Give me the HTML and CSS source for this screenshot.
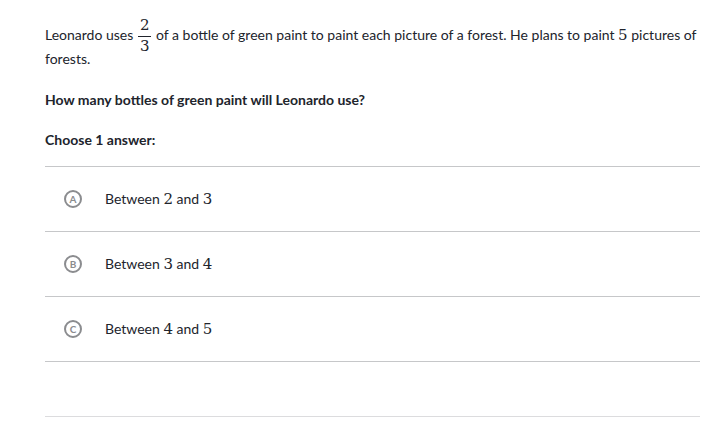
FILE: index.html
```html
<!DOCTYPE html>
<html>
<head>
<meta charset="utf-8">
<link rel="stylesheet" href="styles.css">
</head>
<body>
<div class="page">
  <p class="prompt">Leonardo uses <span class="frac"><span class="num">2</span><span class="den">3</span></span> of a bottle of green paint to paint each picture of a forest. He plans to paint <span class="m">5</span> pictures of forests.</p>
  <p class="question">How many bottles of green paint will Leonardo use?</p>
  <p class="choose">Choose 1 answer:</p>
  <ul class="choices">
    <li class="choice"><span class="bubble">A</span><span class="label">Between <span class="m">2</span> and <span class="m">3</span></span></li>
    <li class="choice"><span class="bubble">B</span><span class="label">Between <span class="m">3</span> and <span class="m">4</span></span></li>
    <li class="choice"><span class="bubble">C</span><span class="label">Between <span class="m">4</span> and <span class="m">5</span></span></li>
  </ul>
  <div class="footer"></div>
</div>
</body>
</html>
```
FILE: styles.css
```css
html, body {
  margin: 0;
  padding: 0;
  background: #fff;
}
.page {
  width: 655px;
  margin-left: 45px;
  font-family: Lato, "Open Sans", sans-serif;
  font-size: 14px;
  color: #21242c;
}
.prompt {
  margin: 0;
  padding-top: 23px;
  line-height: 24px;
}
.frac {
  display: inline-flex;
  flex-direction: column;
  align-items: center;
  vertical-align: middle;
  font-family: "DejaVu Serif", serif;
  font-size: 15px;
  line-height: 17px;
  margin: -10px 1px -10px 1px;
}
.frac .num {
  border-bottom: 1px solid #21242c;
  padding: 0 2px 2px;
}
.frac .den {
  padding-top: 1px;
}
.m {
  font-family: "DejaVu Serif", serif;
  font-size: 15px;
  line-height: 1;
}
.question {
  margin: 0;
  padding-top: 18px;
  font-weight: bold;
  line-height: 22px;
}
.choose {
  margin: 0;
  padding-top: 18px;
  font-weight: bold;
  line-height: 22px;
}
.choices {
  list-style: none;
  margin: 15px 0 0;
  padding: 0;
  border-top: 1px solid #c6c7c9;
}
.choice {
  height: 64px;
  display: flex;
  align-items: center;
  border-bottom: 1px solid #c6c7c9;
  padding-left: 19px;
}
.bubble {
  box-sizing: border-box;
  flex: none;
  width: 18px;
  height: 18px;
  border: 2px solid #8b8c8f;
  border-radius: 50%;
  display: flex;
  align-items: center;
  justify-content: center;
  font-size: 10px;
  line-height: 1;
  font-weight: bold;
  color: #8b8c8f;
  margin-right: 23px;
}
.label {
  line-height: 20px;
}
.footer {
  height: 54px;
  border-bottom: 1px solid #dcdcde;
}
```
